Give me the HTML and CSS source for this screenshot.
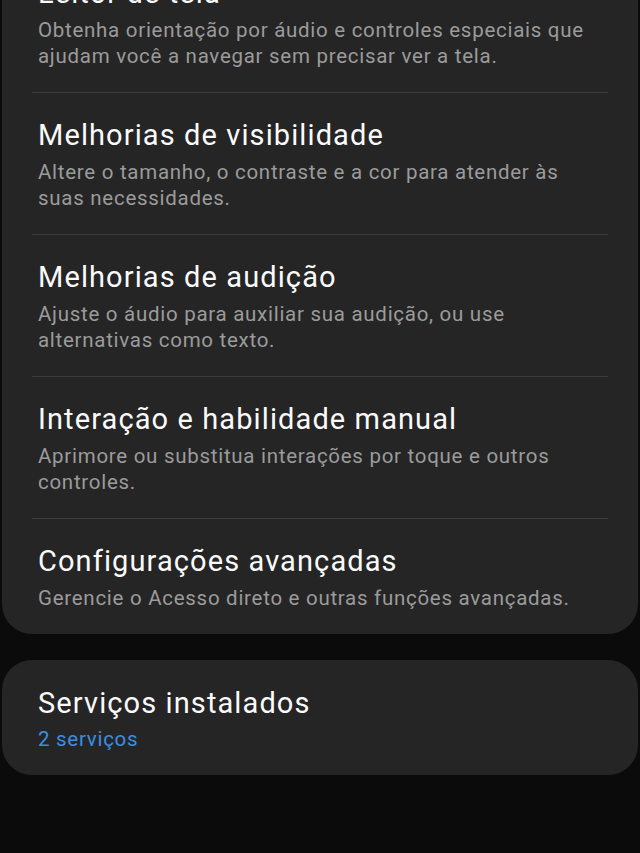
FILE: index.html
```html
<!DOCTYPE html>
<html lang="pt-BR">
<head>
  <meta charset="UTF-8" />
  <meta name="viewport" content="width=device-width, initial-scale=1.0"/>
  <title>Acessibilidade</title>
  <link rel="stylesheet" href="styles.css">
</head>
<body>
  <main class="page">
    <section class="card">
      <div class="item">
        <div class="item-title">Leitor de tela</div>
        <div class="item-sub">Obtenha orientação por áudio e controles especiais que ajudam você a navegar sem precisar ver a tela.</div>
      </div>
      <div class="item">
        <div class="item-title">Melhorias de visibilidade</div>
        <div class="item-sub">Altere o tamanho, o contraste e a cor para atender às suas necessidades.</div>
      </div>
      <div class="item">
        <div class="item-title">Melhorias de audição</div>
        <div class="item-sub">Ajuste o áudio para auxiliar sua audição, ou use alternativas como texto.</div>
      </div>
      <div class="item">
        <div class="item-title">Interação e habilidade manual</div>
        <div class="item-sub">Aprimore ou substitua interações por toque e outros controles.</div>
      </div>
      <div class="item">
        <div class="item-title">Configurações avançadas</div>
        <div class="item-sub">Gerencie o Acesso direto e outras funções avançadas.</div>
      </div>
    </section>

    <section class="card">
      <div class="item">
        <div class="item-title">Serviços instalados</div>
        <div class="item-sub accent">2 serviços</div>
      </div>
    </section>
  </main>
</body>
</html>
```

FILE: styles.css
```css
* {
  box-sizing: border-box;
}

body {
  margin: 0;
  background: #0b0b0b;
  font-family: Roboto, 'Noto Sans', sans-serif;
  color: #fafafa;
  overflow: hidden;
}

/* page is scrolled: the top of the first card is out of view */
.page {
  display: flex;
  flex-direction: column;
  gap: 26px;
  margin-top: -50px;
  padding: 0 2px;
}

.card {
  background: #252525;
  border-radius: 30px;
  padding: 26px 0 0;
}

.item {
  margin: 0 30px;
  padding: 25px 6px 23px;
  border-top: 1px solid #3c3c3c;
}

.item:first-child {
  border-top: none;
  padding-top: 0;
}

.item-title {
  font-size: 29px;
  line-height: 34px;
  letter-spacing: 1.1px;
  color: #fafafa;
}

.item-sub {
  margin-top: 7px;
  font-size: 20.5px;
  line-height: 26px;
  letter-spacing: 0.72px;
  color: #9b9b9b;
}

.item-sub.accent {
  margin-top: 6px;
  color: #3b8ee0;
}
```
